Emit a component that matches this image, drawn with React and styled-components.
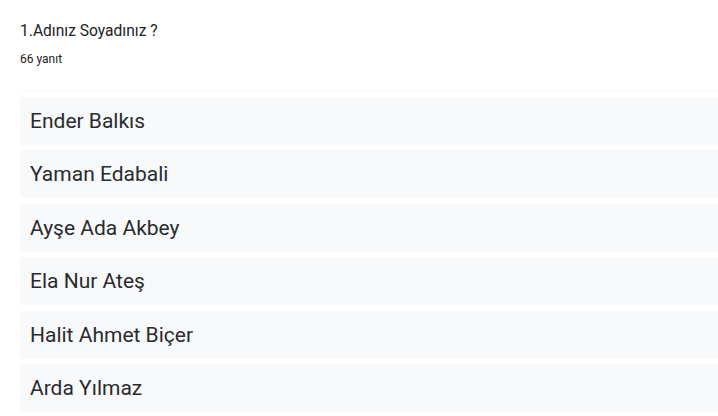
import React from "react";
import styled, { createGlobalStyle } from "styled-components";

const Global = createGlobalStyle`
  html, body { margin: 0; padding: 0; background: #ffffff; }
  body { font-family: Roboto, "Noto Sans", Arial, sans-serif; color: #202124; }
`;

const Page = styled.div`
  padding: 20px 0 0 20px;
  width: 718px;
  box-sizing: border-box;
  overflow: hidden;
`;

const Title = styled.div`
  font-size: 15.6px;
  line-height: 22px;
  letter-spacing: 0;
  color: #202124;
`;

const Count = styled.div`
  margin-top: 9px;
  font-size: 12px;
  line-height: 16px;
  color: #202124;
`;

const Divider = styled.div`
  margin-top: 23px;
  height: 2px;
  background: #fafbfb;
`;

const List = styled.div`
  margin-top: 5px;
  display: flex;
  flex-direction: column;
  gap: 5.4px;
`;

const Row = styled.div`
  height: 48px;
  background: #f8f9fa;
  border-radius: 4px 0 0 4px;
  display: flex;
  align-items: center;
  padding-left: 10px;
  font-size: 21px;
  color: #2a2b2e;
`;

const names = [
  "Ender Balkıs",
  "Yaman Edabali",
  "Ayşe Ada Akbey",
  "Ela Nur Ateş",
  "Halit Ahmet Biçer",
  "Arda Yılmaz",
];

export default function App() {
  return (
    <>
      <Global />
      <Page>
        <Title>1.Adınız Soyadınız ?</Title>
        <Count>66 yanıt</Count>
        <Divider />
        <List>
          {names.map((n) => (
            <Row key={n}>{n}</Row>
          ))}
        </List>
      </Page>
    </>
  );
}
